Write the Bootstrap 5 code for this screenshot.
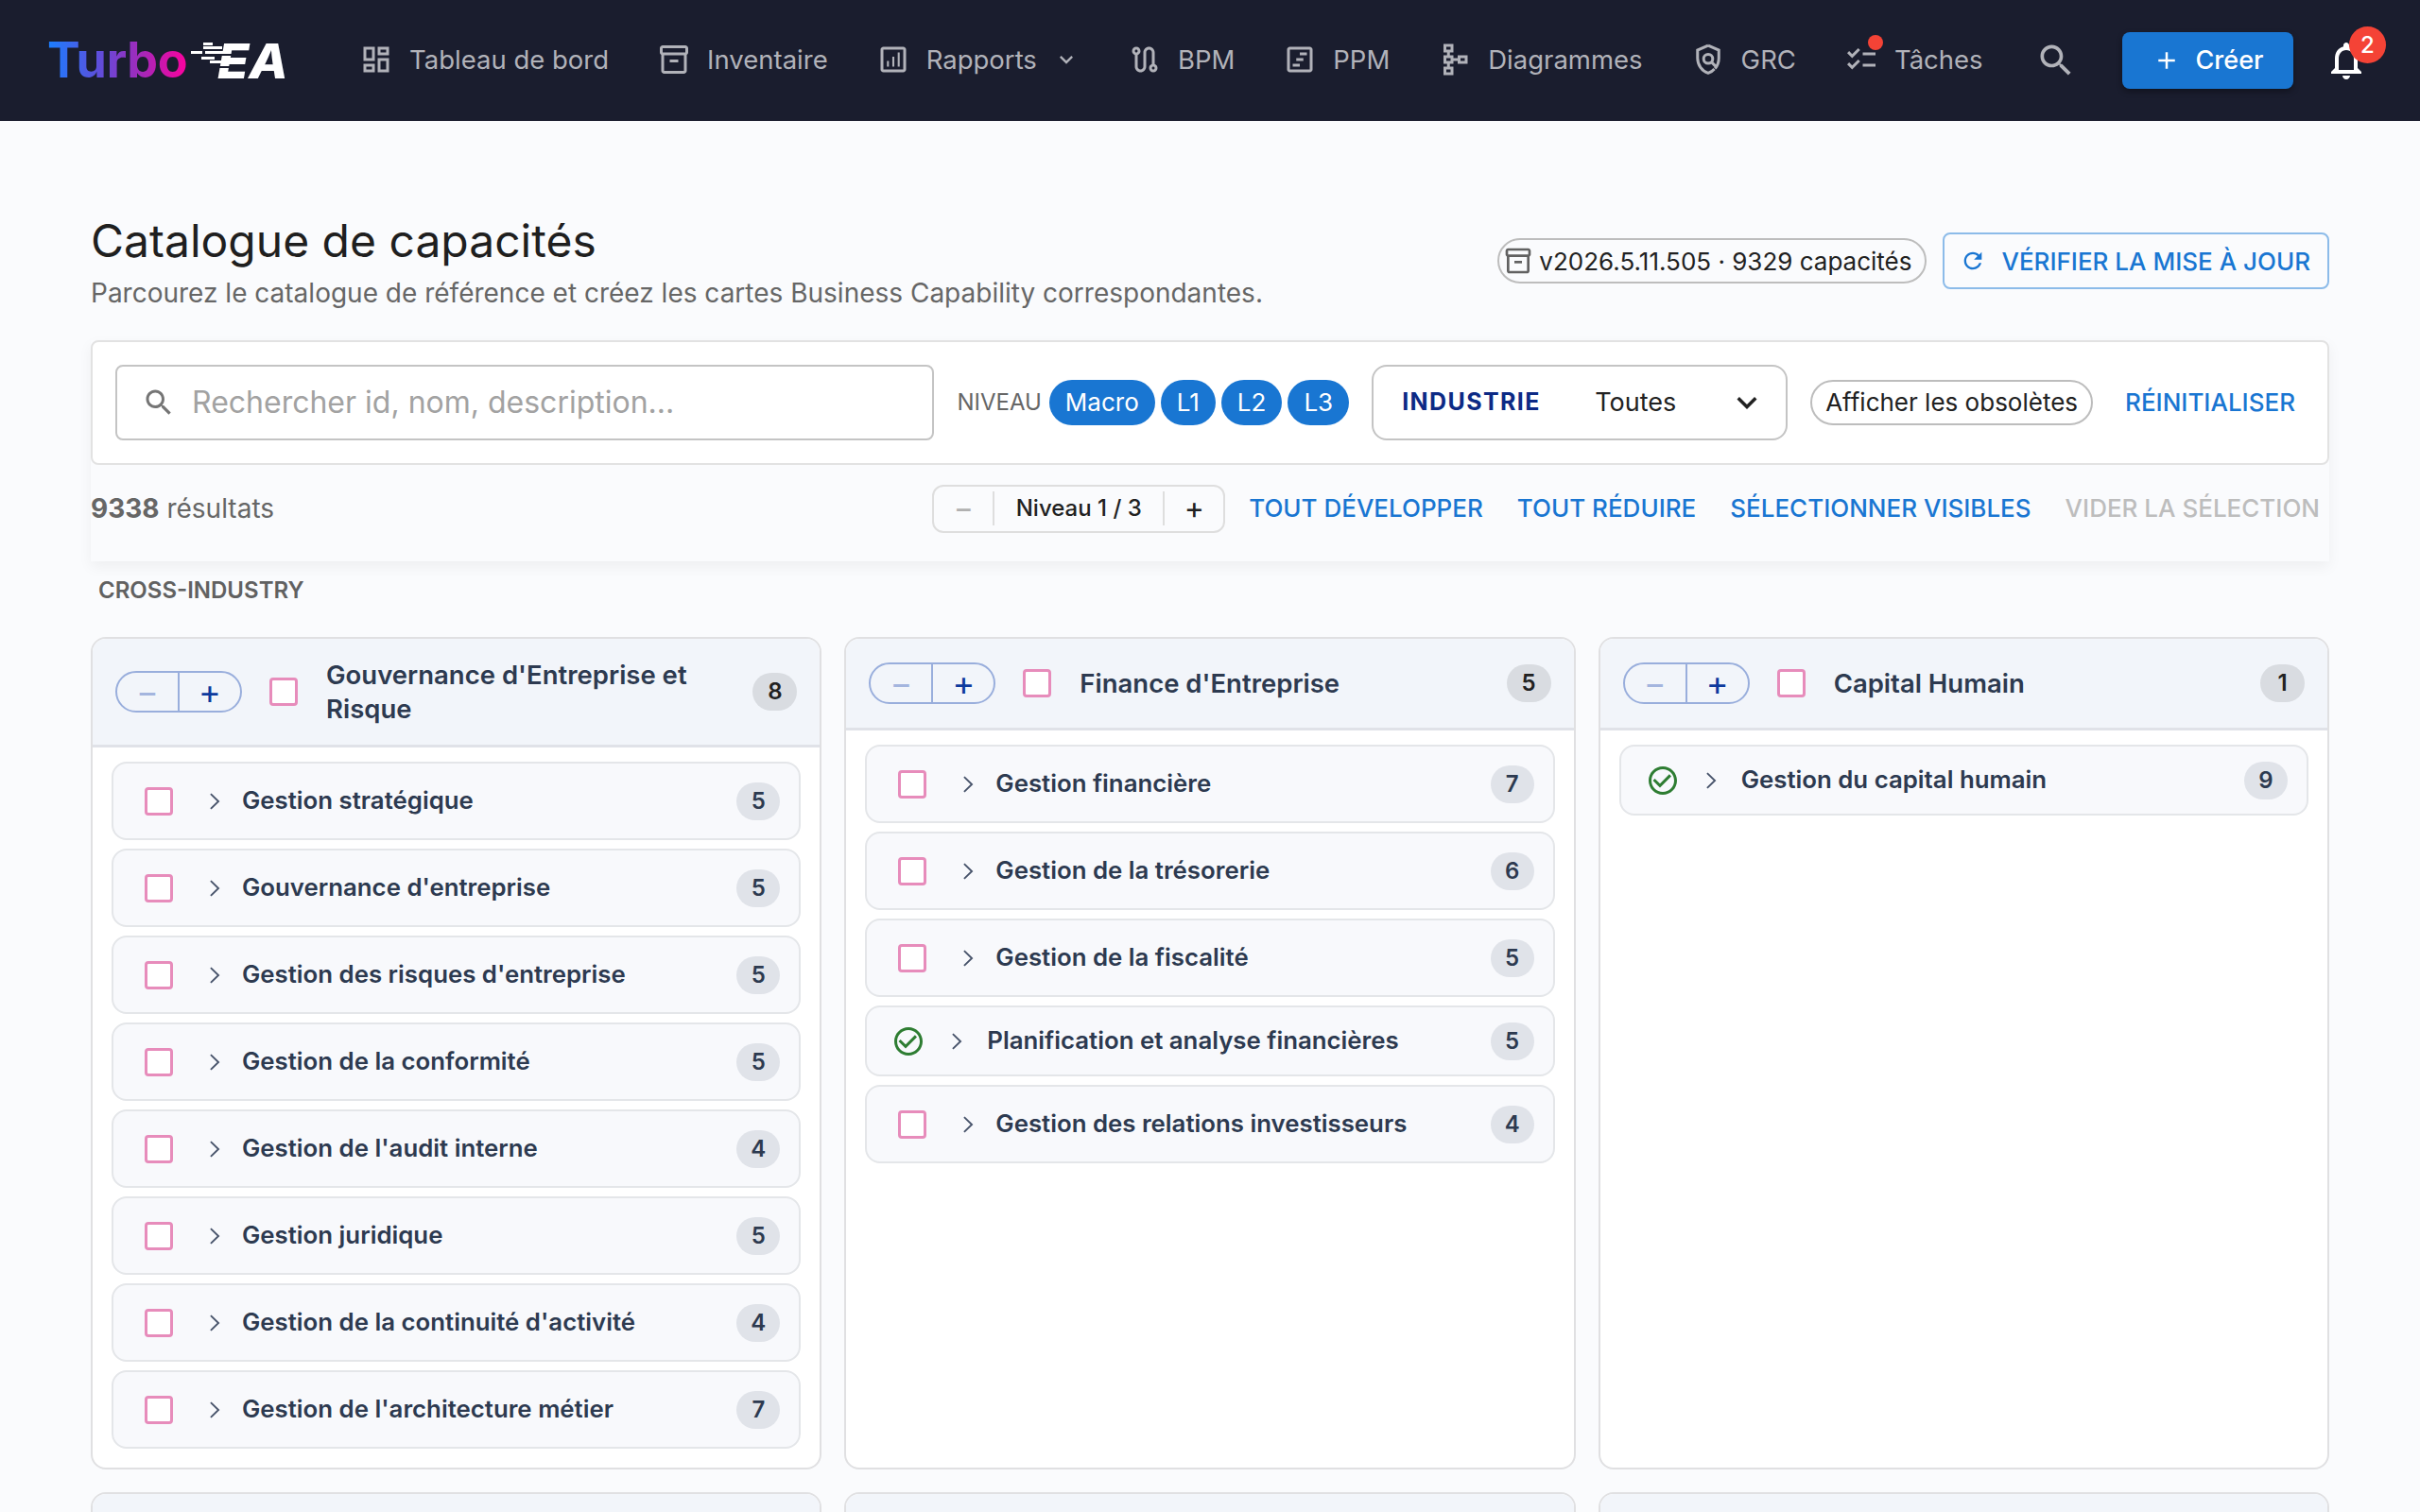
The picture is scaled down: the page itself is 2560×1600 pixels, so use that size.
<!doctype html>
<html lang="fr">
<head>
<meta charset="utf-8">
<title>Catalogue de capacités</title>
<link rel="stylesheet" href="https://cdn.jsdelivr.net/npm/bootstrap@5.3.0/dist/css/bootstrap.min.css">
<style>
html,body{height:100%;overflow:hidden}
body{font-family:Inter,"Noto Sans",sans-serif;background:#fafbfd;color:#212121;font-size:28px}
svg.ico{fill:currentColor;flex:none;display:block}
.app-bar{height:128px;background:#1a1d2e;padding:0 52px 0 50px;flex-wrap:nowrap;justify-content:flex-start}
.brand-wrap{width:255px;height:60px;margin-right:55px;flex:none}
.brand-turbo{font-family:Inter,sans-serif;font-weight:700;font-size:52px;line-height:60px;letter-spacing:-.3px;background:linear-gradient(90deg,#1a7fff 0%,#5b50dc 35%,#a826b8 68%,#ff009c 100%);-webkit-background-clip:text;background-clip:text;color:transparent;white-space:nowrap;flex:none;padding-right:2px}
.brand-ea{font-family:Inter,sans-serif;font-style:italic;font-weight:800;font-size:51px;fill:#fff}
.nav-entry{display:flex;align-items:center;gap:17px;padding:0 20px;font-size:27.5px;line-height:44px;color:#b1b2b9;white-space:nowrap;position:relative}
.nav-entry:hover,.nav-entry:focus{color:#fff}
.nav-list{gap:11px;flex-wrap:nowrap;padding-bottom:2px}
.nav-dot{position:absolute;width:16px;height:16px;border-radius:50%;background:#f44336;left:45px;top:-4px}
.right-group{margin-left:auto;gap:0}
.search-btn{width:52px;height:52px;color:#b1b2b9;padding:0;border:0;background:none;margin-right:44px}
.create-btn{width:181px;height:60px;background:#1976d2;border:0;border-radius:8px;font-size:27px;font-weight:500;color:#fff;display:flex;align-items:center;justify-content:center;gap:16px;box-shadow:0 3px 6px rgba(0,0,0,.35);margin-right:30px;padding:0}
.bell-box{width:52px;height:52px;color:#fff;padding:0;border:0;background:none;position:relative}
.bell-count{position:absolute;left:29px;top:-10px;width:39px;height:39px;border-radius:50%;background:#f44336;color:#fff;font-size:24px;font-weight:500;line-height:39px;text-align:center;padding:0}
.main-area{padding:99px 96px 0}
.page-title{font-size:48px;line-height:56px;font-weight:400;margin:0;color:#1f1f1f}
.page-sub{font-size:28px;line-height:42px;color:#666;margin:6px 0 0}
.head-right{gap:17px;padding-bottom:6px}
.ver-chip{height:48px;border:2px solid #bdbdbd;border-radius:24px;display:flex;align-items:center;padding:0 14px 0 4px;gap:6px;font-size:26px;color:#212121;white-space:nowrap}
.ver-chip svg{color:#616161}
.check-btn{height:60px;border:2px solid #8cbbe9;border-radius:8px;color:#1976d2;background:none;font-size:26px;font-weight:500;display:flex;align-items:center;gap:16px;padding:0 18px 0 16px;white-space:nowrap}
.tool-wrap{margin-top:29px;box-shadow:0 6px 14px rgba(0,0,0,.05)}
.filter-box{background:#fff;border:2px solid #e2e2e2;border-radius:8px;padding:24px;gap:24px;height:132px;flex-wrap:nowrap}
.search-box{flex:1 1 auto;height:80px;border:2px solid #c4c4c4;border-radius:8px;padding:0 26px;gap:15px;color:#757575}
.search-box input{border:0;outline:0;flex:1;font-size:32px;color:#212121;min-width:0;background:none;font-family:inherit}
.search-box input::placeholder{color:#a2a2a2;opacity:1}
.lvl-label{font-size:24px;color:#666;margin-right:8px}
.lvl-pill{height:48px;border-radius:24px;background:#1976d2;color:#fff;font-size:26px;line-height:48px;padding:0 17px;border:0;margin-right:6px;flex:none}
.lvl-pill:last-child{margin-right:0}
.ind-select{width:440px;height:80px;border:2px solid #c4c4c4;border-radius:16px;padding:0 20px 0 30px;flex:none}
.ind-name{font-size:25px;font-weight:700;letter-spacing:1.4px;color:#0d2a85;width:204px}
.ind-val{font-size:27px;color:#212121;flex:1}
.obs-chip{height:48px;border:2px solid #bdbdbd;border-radius:24px;padding:0 14px;font-size:26px;background:none;line-height:44px;color:#212121;white-space:nowrap;flex:none}
.txt-btn{font-size:26px;font-weight:500;color:#1976d2;background:none;border:0;padding:0 10px;white-space:nowrap;flex:none;line-height:40px}
.txt-btn.off{color:#bdbdbd}
.result-bar{padding:20px 0 30px;height:102px}
.result-count{font-size:28px;color:#666}
.result-count b{font-weight:700}
.stepper-box{height:51px;width:310px;border:2px solid #dedede;border-radius:12px;margin-right:15px;flex:none}
.step-cell{display:flex;align-items:center;justify-content:center;height:36px;width:62px;background:none;border:0;padding:0;font-size:32px;color:#212121;line-height:1}
.step-cell.dim{color:#b0b0b0}
.step-mid{flex:1;height:36px;border-left:2px solid #dedede;border-right:2px solid #dedede;display:flex;align-items:center;justify-content:center;font-size:24px;font-weight:500;color:#212121;white-space:nowrap}
.step-links{gap:16px}
.sect-label{font-size:24px;line-height:36px;font-weight:600;color:#616161;margin:13px 0 31px 8px}
.cap-grid{display:grid;grid-template-columns:repeat(3,1fr);gap:24px}
.cap-card{background:#fff;border:2px solid #e0e0e2;border-radius:16px;overflow:hidden;display:flex;flex-direction:column}
.cap-head{background:#f2f5fa;border-bottom:3px solid #e0e2e8;padding:18px 24px;display:flex;align-items:center}
.pill-step{width:134px;height:44px;border:2px solid #99aedc;border-radius:22px;display:flex;flex:none;margin-right:29px}
.pill-step span{flex:1;display:flex;align-items:center;justify-content:center;font-size:36px;line-height:1;color:#0d3a9e}
.pill-step span:first-child{color:#a4b5de;border-right:2px solid #99aedc}
.cap-tick.form-check-input{width:30px;height:30px;margin:14px 0;border:3px solid #e78cbb;border-radius:4px;flex:none;background-color:#fff}
.cap-head .cap-tick{margin-right:30px}
.cap-title{flex:1;font-size:27.5px;font-weight:600;line-height:36px;color:#2d3a50;padding:2px 16px 2px 0}
.cap-num{width:47px;height:40px;border-radius:20px;display:flex;align-items:center;justify-content:center;font-size:24px;font-weight:600;flex:none;background:#d9dce1;color:#212121}
.cap-body{padding:15px 20px 20px;display:flex;flex-direction:column;gap:9px}
.cap-row{background:#f8f9fc;border:2px solid #e4e6e9;border-radius:16px;padding:10.5px 20px;display:flex;align-items:center}
.cap-row .cap-tick{margin-left:13px;margin-right:30px}
.row-chev{width:28px;height:28px;color:#47536a;margin-right:15px;flex:none}
.row-name{flex:1;font-size:25.8px;font-weight:600;color:#2d3a50;white-space:nowrap}
.row-num{background:#e0e3e9;color:#2d3a50;width:46px}
.done-ico{color:#2e7d32;width:36px;height:36px;margin:7px 19px 7px 6px}
.cap-row.done .row-chev{margin-right:18px}
.cap-stub{height:200px}
.cap-stub .cap-head{height:99px}
</style>
</head>
<body class="d-flex flex-column">
<svg width="0" height="0" class="position-absolute">
<defs>
<symbol id="i-dash" viewBox="0 0 24 24"><path d="M19 5v2h-4V5h4M9 5v6H5V5h4m10 8v6h-4v-6h4M9 17v2H5v-2h4M21 3h-8v6h8V3zM11 3H3v10h8V3zm10 8h-8v10h8V11zm-10 4H3v6h8v-6z"/></symbol>
<symbol id="i-box" viewBox="0 0 24 24"><path d="M20 2H4c-1 0-2 .9-2 2v3.01c0 .72.43 1.34 1 1.69V20c0 1.1 1.1 2 2 2h14c.9 0 2-.9 2-2V8.7c.57-.35 1-.97 1-1.69V4c0-1.1-1-2-2-2zm-1 18H5V9h14v11zm1-13H4V4h16v3z"/><path d="M9 12h6v2H9z"/></symbol>
<symbol id="i-chart" viewBox="0 0 24 24"><path d="M19 3H5c-1.1 0-2 .9-2 2v14c0 1.1.9 2 2 2h14c1.1 0 2-.9 2-2V5c0-1.1-.9-2-2-2zm0 16H5V5h14v14z"/><path d="M7.5 13h1.4v4H7.5zM11.3 10h1.4v7h-1.4zM15.1 7h1.4v10h-1.4z"/></symbol>
<symbol id="i-route" viewBox="0 0 24 24"><path d="M19 15.18V7c0-2.21-1.79-4-4-4s-4 1.79-4 4v10c0 1.1-.9 2-2 2s-2-.9-2-2V8.82C8.16 8.4 9 7.3 9 6c0-1.66-1.34-3-3-3S3 4.34 3 6c0 1.3.84 2.4 2 2.82V17c0 2.21 1.79 4 4 4s4-1.79 4-4V7c0-1.1.9-2 2-2s2 .9 2 2v8.18c-1.16.41-2 1.51-2 2.82 0 1.66 1.34 3 3 3s3-1.34 3-3c0-1.3-.84-2.4-2-2.82zM6 7c-.55 0-1-.45-1-1s.45-1 1-1 1 .45 1 1-.45 1-1 1zm12 12c-.55 0-1-.45-1-1s.45-1 1-1 1 .45 1 1-.45 1-1 1z"/></symbol>
<symbol id="i-time" viewBox="0 0 24 24"><path d="M19 3H5c-1.1 0-2 .9-2 2v14c0 1.1.9 2 2 2h14c1.1 0 2-.9 2-2V5c0-1.1-.9-2-2-2zm0 16H5V5h14v14z"/><path d="M12 7h5v2h-5zM9.5 11h5v2h-5zM7 15h5v2H7z"/></symbol>
<symbol id="i-schema" viewBox="0 0 24 24"><path d="M14 9v2h-3V9H8.5V7H11V1H4v6h2.5v2H4v6h2.5v2H4v6h7v-6H8.5v-2H11v-2h3v2h7V9h-7zM9 5H6V3h3v2zm0 8H6v-2h3v2zm0 8H6v-2h3v2zm10-8h-3v-2h3v2z"/></symbol>
<symbol id="i-policy" viewBox="0 0 24 24"><path d="M12 2.1 4.5 5.4V11c0 4.8 3.1 9.3 7.5 10.6 1.7-.5 3.2-1.5 4.4-2.9" fill="none" stroke="currentColor" stroke-width="2"/><path d="M16.9 18.4c1.6-2 2.6-4.6 2.6-7.4V5.4L12 2.1" fill="none" stroke="currentColor" stroke-width="2"/><circle cx="12" cy="11.5" r="3.2" fill="none" stroke="currentColor" stroke-width="2"/><path d="m14.4 13.9 3 3" fill="none" stroke="currentColor" stroke-width="2"/></symbol>
<symbol id="i-list" viewBox="0 0 24 24"><path d="M22 7h-9v2h9V7zm0 8h-9v2h9v-2zM5.54 11 2 7.46l1.41-1.41 2.12 2.12 4.24-4.24 1.41 1.41L5.54 11zm0 8L2 15.46l1.41-1.41 2.12 2.12 4.24-4.24 1.41 1.41L5.54 19z"/></symbol>
<symbol id="i-search" viewBox="0 0 24 24"><path d="M15.5 14h-.79l-.28-.27C15.41 12.59 16 11.11 16 9.5 16 5.91 13.09 3 9.5 3S3 5.91 3 9.5 5.91 16 9.5 16c1.61 0 3.09-.59 4.23-1.57l.27.28v.79l5 4.99L20.49 19l-4.99-5zm-6 0C7.01 14 5 11.99 5 9.5S7.01 5 9.5 5 14 7.01 14 9.5 11.99 14 9.5 14z"/></symbol>
<symbol id="i-bell" viewBox="0 0 24 24"><path d="M12 22c1.1 0 2-.9 2-2h-4c0 1.1.9 2 2 2zm6-6v-5c0-3.07-1.63-5.64-4.5-6.32V4c0-.83-.67-1.5-1.5-1.5s-1.5.67-1.5 1.5v.68C7.64 5.36 6 7.92 6 11v5l-2 2v1h16v-1l-2-2zm-2 1H8v-6c0-2.48 1.51-4.5 4-4.5s4 2.02 4 4.5v6z"/></symbol>
<symbol id="i-plus" viewBox="0 0 24 24"><path d="M19 13h-6v6h-2v-6H5v-2h6V5h2v6h6v2z"/></symbol>
<symbol id="i-refresh" viewBox="0 0 24 24"><path d="M17.65 6.35C16.2 4.9 14.21 4 12 4c-4.42 0-7.99 3.58-7.99 8s3.57 8 7.99 8c3.73 0 6.84-2.55 7.73-6h-2.08c-.82 2.33-3.04 4-5.65 4-3.31 0-6-2.69-6-6s2.69-6 6-6c1.66 0 3.14.69 4.22 1.78L13 11h7V4l-2.35 2.35z"/></symbol>
<symbol id="i-down" viewBox="0 0 24 24"><path d="M16.59 8.59 12 13.17 7.41 8.59 6 10l6 6 6-6z"/></symbol>
<symbol id="i-right" viewBox="0 0 24 24"><path d="m8.5 5.2 7 6.8-7 6.8" fill="none" stroke="currentColor" stroke-width="1.6"/></symbol>
<symbol id="i-done" viewBox="0 0 24 24"><path d="M16.59 7.58 10 14.17l-3.59-3.58L5 12l5 5 8-8zM12 2C6.48 2 2 6.48 2 12s4.48 10 10 10 10-4.48 10-10S17.52 2 12 2zm0 18c-4.42 0-8-3.58-8-8s3.58-8 8-8 8 3.58 8 8-3.58 8-8 8z"/></symbol>
</defs>
</svg>

<nav class="navbar app-bar d-flex align-items-center flex-shrink-0">
  <div class="brand-wrap d-flex align-items-center justify-content-between">
    <span class="brand-turbo">Turbo</span>
    <svg width="105" height="50" viewBox="0 0 105 50" class="d-block flex-shrink-0">
      <text x="30" y="44" class="brand-ea" textLength="75" lengthAdjust="spacingAndGlyphs">EA</text>
      <g fill="#fff"><rect x="15" y="6" width="10" height="3"/><rect x="15" y="10" width="20" height="3"/><rect x="2" y="15" width="12" height="3"/><rect x="17" y="15" width="20" height="3"/><rect x="13" y="21" width="14" height="3"/><rect x="22" y="25" width="12" height="3"/></g>
      <g fill="#1a1d2e"><rect x="30" y="18" width="22" height="2"/><rect x="28" y="31" width="22" height="2"/></g>
    </svg>
  </div>
  <div class="navbar-nav flex-row nav-list">
    <a class="nav-link nav-entry" href="#"><svg class="ico" width="36" height="36"><use href="#i-dash"/></svg>Tableau de bord</a>
    <a class="nav-link nav-entry" href="#"><svg class="ico" width="36" height="36"><use href="#i-box"/></svg>Inventaire</a>
    <a class="nav-link nav-entry" href="#"><svg class="ico" width="36" height="36"><use href="#i-chart"/></svg>Rapports<svg class="ico" width="28" height="28"><use href="#i-down"/></svg></a>
    <a class="nav-link nav-entry" href="#"><svg class="ico" width="36" height="36"><use href="#i-route"/></svg>BPM</a>
    <a class="nav-link nav-entry" href="#"><svg class="ico" width="36" height="36"><use href="#i-time"/></svg>PPM</a>
    <a class="nav-link nav-entry" href="#"><svg class="ico" width="36" height="36"><use href="#i-schema"/></svg>Diagrammes</a>
    <a class="nav-link nav-entry" href="#"><svg class="ico" width="36" height="36"><use href="#i-policy"/></svg>GRC</a>
    <a class="nav-link nav-entry" href="#"><svg class="ico" width="36" height="36"><use href="#i-list"/></svg><span class="nav-dot"></span>Tâches</a>
  </div>
  <div class="right-group d-flex align-items-center">
    <button class="search-btn d-flex align-items-center justify-content-center" aria-label="Rechercher"><svg class="ico" width="44" height="44"><use href="#i-search"/></svg></button>
    <button class="btn create-btn"><svg class="ico" width="30" height="30"><use href="#i-plus"/></svg>Créer</button>
    <button class="bell-box d-flex align-items-center justify-content-center" aria-label="Notifications"><svg class="ico" width="48" height="48"><use href="#i-bell"/></svg><span class="bell-count">2</span></button>
  </div>
</nav>

<main class="main-area flex-grow-1 overflow-hidden">
  <div class="d-flex justify-content-between align-items-center">
    <div>
      <h1 class="page-title">Catalogue de capacités</h1>
      <p class="page-sub">Parcourez le catalogue de référence et créez les cartes Business Capability correspondantes.</p>
    </div>
    <div class="d-flex align-items-center head-right">
      <span class="ver-chip"><svg class="ico" width="32" height="32"><use href="#i-box"/></svg>v2026.5.11.505 · 9329 capacités</span>
      <button class="check-btn"><svg class="ico" width="28" height="28"><use href="#i-refresh"/></svg>VÉRIFIER LA MISE À JOUR</button>
    </div>
  </div>

  <div class="tool-wrap">
    <div class="filter-box d-flex align-items-center">
      <label class="search-box d-flex align-items-center mb-0"><svg class="ico" width="36" height="36"><use href="#i-search"/></svg><input type="text" placeholder="Rechercher id, nom, description..."></label>
      <div class="d-flex align-items-center">
        <span class="lvl-label">NIVEAU</span><span class="lvl-pill">Macro</span><span class="lvl-pill">L1</span><span class="lvl-pill">L2</span><span class="lvl-pill">L3</span>
      </div>
      <div class="ind-select d-flex align-items-center"><span class="ind-name">INDUSTRIE</span><span class="ind-val">Toutes</span><svg class="ico" width="42" height="42"><use href="#i-down"/></svg></div>
      <button class="obs-chip">Afficher les obsolètes</button>
      <button class="txt-btn">RÉINITIALISER</button>
    </div>
    <div class="result-bar d-flex align-items-center justify-content-between">
      <div class="result-count"><b>9338</b> résultats</div>
      <div class="d-flex align-items-center">
        <div class="stepper-box d-flex align-items-center"><button class="step-cell dim">−</button><span class="step-mid">Niveau 1 / 3</span><button class="step-cell">+</button></div>
        <div class="d-flex step-links">
          <button class="txt-btn">TOUT DÉVELOPPER</button>
          <button class="txt-btn">TOUT RÉDUIRE</button>
          <button class="txt-btn">SÉLECTIONNER VISIBLES</button>
          <button class="txt-btn off">VIDER LA SÉLECTION</button>
        </div>
      </div>
    </div>
  </div>

  <div class="sect-label">CROSS-INDUSTRY</div>

  <div class="cap-grid">
    <section class="cap-card">
      <header class="cap-head">
        <div class="pill-step"><span>−</span><span>+</span></div>
        <input type="checkbox" class="form-check-input cap-tick">
        <div class="cap-title">Gouvernance d'Entreprise et Risque</div>
        <span class="cap-num">8</span>
      </header>
      <div class="cap-body">
        <div class="cap-row"><input type="checkbox" class="form-check-input cap-tick"><svg class="ico row-chev"><use href="#i-right"/></svg><span class="row-name">Gestion stratégique</span><span class="cap-num row-num">5</span></div>
        <div class="cap-row"><input type="checkbox" class="form-check-input cap-tick"><svg class="ico row-chev"><use href="#i-right"/></svg><span class="row-name">Gouvernance d'entreprise</span><span class="cap-num row-num">5</span></div>
        <div class="cap-row"><input type="checkbox" class="form-check-input cap-tick"><svg class="ico row-chev"><use href="#i-right"/></svg><span class="row-name">Gestion des risques d'entreprise</span><span class="cap-num row-num">5</span></div>
        <div class="cap-row"><input type="checkbox" class="form-check-input cap-tick"><svg class="ico row-chev"><use href="#i-right"/></svg><span class="row-name">Gestion de la conformité</span><span class="cap-num row-num">5</span></div>
        <div class="cap-row"><input type="checkbox" class="form-check-input cap-tick"><svg class="ico row-chev"><use href="#i-right"/></svg><span class="row-name">Gestion de l'audit interne</span><span class="cap-num row-num">4</span></div>
        <div class="cap-row"><input type="checkbox" class="form-check-input cap-tick"><svg class="ico row-chev"><use href="#i-right"/></svg><span class="row-name">Gestion juridique</span><span class="cap-num row-num">5</span></div>
        <div class="cap-row"><input type="checkbox" class="form-check-input cap-tick"><svg class="ico row-chev"><use href="#i-right"/></svg><span class="row-name">Gestion de la continuité d'activité</span><span class="cap-num row-num">4</span></div>
        <div class="cap-row"><input type="checkbox" class="form-check-input cap-tick"><svg class="ico row-chev"><use href="#i-right"/></svg><span class="row-name">Gestion de l'architecture métier</span><span class="cap-num row-num">7</span></div>
      </div>
    </section>
    <section class="cap-card">
      <header class="cap-head">
        <div class="pill-step"><span>−</span><span>+</span></div>
        <input type="checkbox" class="form-check-input cap-tick">
        <div class="cap-title">Finance d'Entreprise</div>
        <span class="cap-num">5</span>
      </header>
      <div class="cap-body">
        <div class="cap-row"><input type="checkbox" class="form-check-input cap-tick"><svg class="ico row-chev"><use href="#i-right"/></svg><span class="row-name">Gestion financière</span><span class="cap-num row-num">7</span></div>
        <div class="cap-row"><input type="checkbox" class="form-check-input cap-tick"><svg class="ico row-chev"><use href="#i-right"/></svg><span class="row-name">Gestion de la trésorerie</span><span class="cap-num row-num">6</span></div>
        <div class="cap-row"><input type="checkbox" class="form-check-input cap-tick"><svg class="ico row-chev"><use href="#i-right"/></svg><span class="row-name">Gestion de la fiscalité</span><span class="cap-num row-num">5</span></div>
        <div class="cap-row done"><svg class="ico done-ico"><use href="#i-done"/></svg><svg class="ico row-chev"><use href="#i-right"/></svg><span class="row-name">Planification et analyse financières</span><span class="cap-num row-num">5</span></div>
        <div class="cap-row"><input type="checkbox" class="form-check-input cap-tick"><svg class="ico row-chev"><use href="#i-right"/></svg><span class="row-name">Gestion des relations investisseurs</span><span class="cap-num row-num">4</span></div>
      </div>
    </section>
    <section class="cap-card">
      <header class="cap-head">
        <div class="pill-step"><span>−</span><span>+</span></div>
        <input type="checkbox" class="form-check-input cap-tick">
        <div class="cap-title">Capital Humain</div>
        <span class="cap-num">1</span>
      </header>
      <div class="cap-body">
        <div class="cap-row done"><svg class="ico done-ico"><use href="#i-done"/></svg><svg class="ico row-chev"><use href="#i-right"/></svg><span class="row-name">Gestion du capital humain</span><span class="cap-num row-num">9</span></div>
      </div>
    </section>
    <section class="cap-card cap-stub"><header class="cap-head"></header></section>
    <section class="cap-card cap-stub"><header class="cap-head"></header></section>
    <section class="cap-card cap-stub"><header class="cap-head"></header></section>
  </div>
</main>
<script src="https://cdn.jsdelivr.net/npm/bootstrap@5.3.0/dist/js/bootstrap.bundle.min.js"></script>
</body>
</html>
